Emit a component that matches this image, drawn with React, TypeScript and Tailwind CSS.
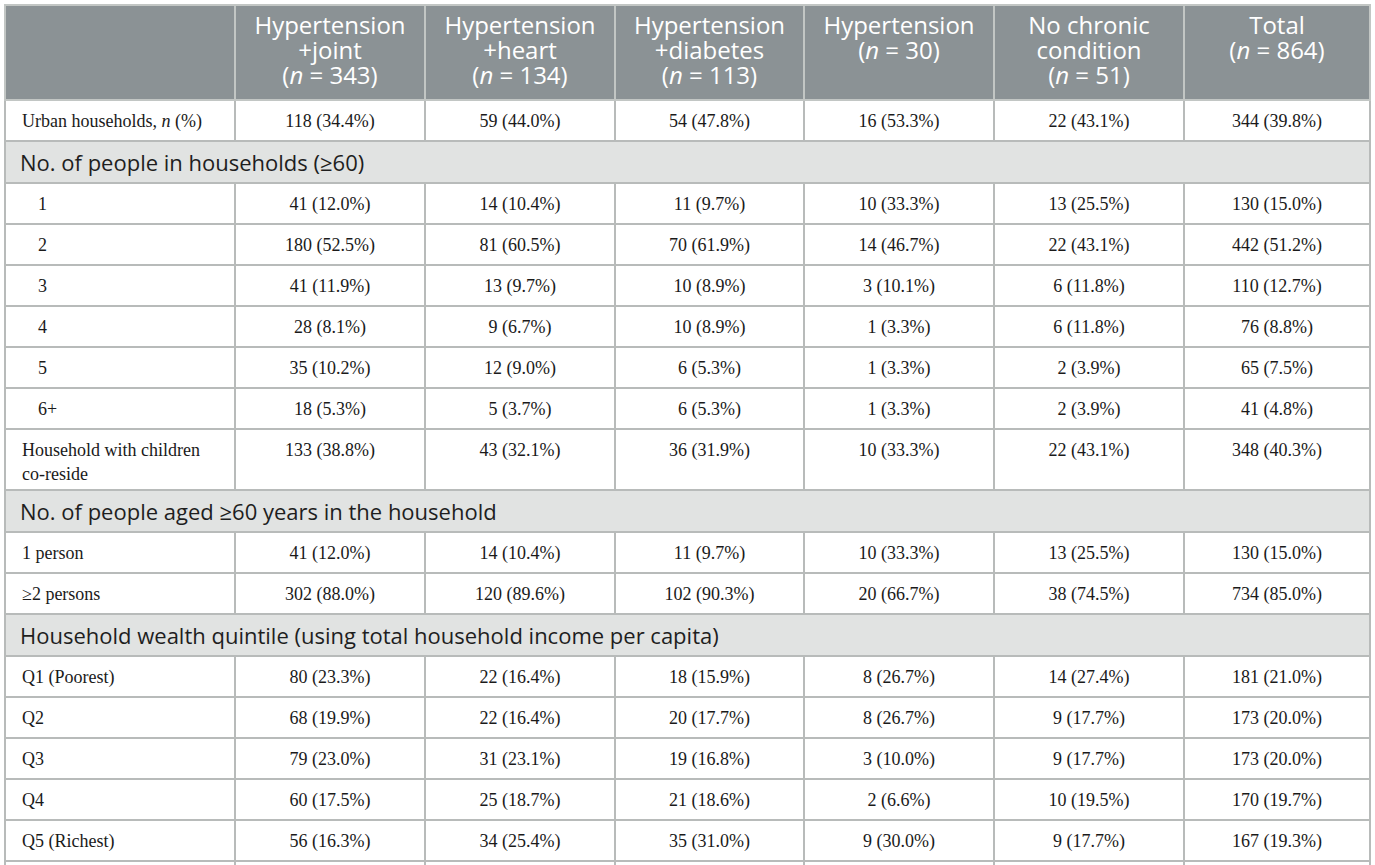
const serif = "font-['Liberation_Serif',serif]";
const sans = "font-['Open_Sans',sans-serif]";

type Row =
  | { kind: "section"; label: React.ReactNode }
  | { kind: "data"; label: React.ReactNode; indent?: boolean; values: string[] };

const headers: React.ReactNode[][] = [
  ["Hypertension", "+joint", <>(<i>n</i> = 343)</>],
  ["Hypertension", "+heart", <>(<i>n</i> = 134)</>],
  ["Hypertension", "+diabetes", <>(<i>n</i> = 113)</>],
  ["Hypertension", <>(<i>n</i> = 30)</>],
  ["No chronic", "condition", <>(<i>n</i> = 51)</>],
  ["Total", <>(<i>n</i> = 864)</>],
];

const rows: Row[] = [
  {
    kind: "data",
    label: <>Urban households, <i>n</i> (%)</>,
    values: ["118 (34.4%)", "59 (44.0%)", "54 (47.8%)", "16 (53.3%)", "22 (43.1%)", "344 (39.8%)"],
  },
  { kind: "section", label: "No. of people in households (\u226560)" },
  { kind: "data", indent: true, label: "1", values: ["41 (12.0%)", "14 (10.4%)", "11 (9.7%)", "10 (33.3%)", "13 (25.5%)", "130 (15.0%)"] },
  { kind: "data", indent: true, label: "2", values: ["180 (52.5%)", "81 (60.5%)", "70 (61.9%)", "14 (46.7%)", "22 (43.1%)", "442 (51.2%)"] },
  { kind: "data", indent: true, label: "3", values: ["41 (11.9%)", "13 (9.7%)", "10 (8.9%)", "3 (10.1%)", "6 (11.8%)", "110 (12.7%)"] },
  { kind: "data", indent: true, label: "4", values: ["28 (8.1%)", "9 (6.7%)", "10 (8.9%)", "1 (3.3%)", "6 (11.8%)", "76 (8.8%)"] },
  { kind: "data", indent: true, label: "5", values: ["35 (10.2%)", "12 (9.0%)", "6 (5.3%)", "1 (3.3%)", "2 (3.9%)", "65 (7.5%)"] },
  { kind: "data", indent: true, label: "6+", values: ["18 (5.3%)", "5 (3.7%)", "6 (5.3%)", "1 (3.3%)", "2 (3.9%)", "41 (4.8%)"] },
  {
    kind: "data",
    label: <>Household with children<br />co-reside</>,
    values: ["133 (38.8%)", "43 (32.1%)", "36 (31.9%)", "10 (33.3%)", "22 (43.1%)", "348 (40.3%)"],
  },
  { kind: "section", label: "No. of people aged \u226560 years in the household" },
  { kind: "data", label: "1 person", values: ["41 (12.0%)", "14 (10.4%)", "11 (9.7%)", "10 (33.3%)", "13 (25.5%)", "130 (15.0%)"] },
  { kind: "data", label: "\u22652 persons", values: ["302 (88.0%)", "120 (89.6%)", "102 (90.3%)", "20 (66.7%)", "38 (74.5%)", "734 (85.0%)"] },
  { kind: "section", label: "Household wealth quintile (using total household income per capita)" },
  { kind: "data", label: "Q1 (Poorest)", values: ["80 (23.3%)", "22 (16.4%)", "18 (15.9%)", "8 (26.7%)", "14 (27.4%)", "181 (21.0%)"] },
  { kind: "data", label: "Q2", values: ["68 (19.9%)", "22 (16.4%)", "20 (17.7%)", "8 (26.7%)", "9 (17.7%)", "173 (20.0%)"] },
  { kind: "data", label: "Q3", values: ["79 (23.0%)", "31 (23.1%)", "19 (16.8%)", "3 (10.0%)", "9 (17.7%)", "173 (20.0%)"] },
  { kind: "data", label: "Q4", values: ["60 (17.5%)", "25 (18.7%)", "21 (18.6%)", "2 (6.6%)", "10 (19.5%)", "170 (19.7%)"] },
  { kind: "data", label: "Q5 (Richest)", values: ["56 (16.3%)", "34 (25.4%)", "35 (31.0%)", "9 (30.0%)", "9 (17.7%)", "167 (19.3%)"] },
];

const widths = ["w-[230px]", "w-[190px]", "w-[190px]", "w-[189px]", "w-[190px]", "w-[190px]", "w-[186px]"];

const cell = `${serif} align-top border-2 border-[#b8bbba] pt-[8px] pb-[3px] text-[18px] leading-[24px]`;

export default function App() {
  return (
    <div className="bg-white w-[1375px] h-[865px] overflow-hidden pt-[4px] pl-[4px]">
      <table className="table-fixed border-collapse w-[1366px] text-[#1a1a1a]">
        <colgroup>
          {widths.map((w, i) => (
            <col key={i} className={w} />
          ))}
        </colgroup>
        <thead>
          <tr className="bg-[#8b9295] h-[95px]">
            <th className="border-2 border-[#c2c6c4]" />
            {headers.map((lines, i) => (
              <th
                key={i}
                className={`${sans} align-top border-2 border-[#c2c6c4] border-l-[#a3a9aa] pt-[6px] text-[24px] leading-[25px] font-normal text-white text-center`}
              >
                {lines.map((l, j) => (
                  <div key={j}>{l}</div>
                ))}
              </th>
            ))}
          </tr>
        </thead>
        <tbody>
          {rows.map((r, i) =>
            r.kind === "section" ? (
              <tr key={i} className="bg-[#e1e3e2] h-[42px]">
                <td
                  colSpan={7}
                  className={`${sans} border-2 border-[#b8bbba] pl-[14px] text-[22px] leading-[28px] text-[#1e1e1e]`}
                >
                  {r.label}
                </td>
              </tr>
            ) : (
              <tr key={i} className="bg-white h-[41px]">
                <td className={`${cell} ${r.indent ? "pl-[32px]" : "pl-[16px]"}`}>{r.label}</td>
                {r.values.map((v, j) => (
                  <td key={j} className={`${cell} text-center`}>
                    {v}
                  </td>
                ))}
              </tr>
            )
          )}
          <tr className="h-[12px]">
            {widths.map((_, i) => (
              <td key={i} className="border-x-2 border-[#b8bbba]" />
            ))}
          </tr>
        </tbody>
      </table>
    </div>
  );
}
